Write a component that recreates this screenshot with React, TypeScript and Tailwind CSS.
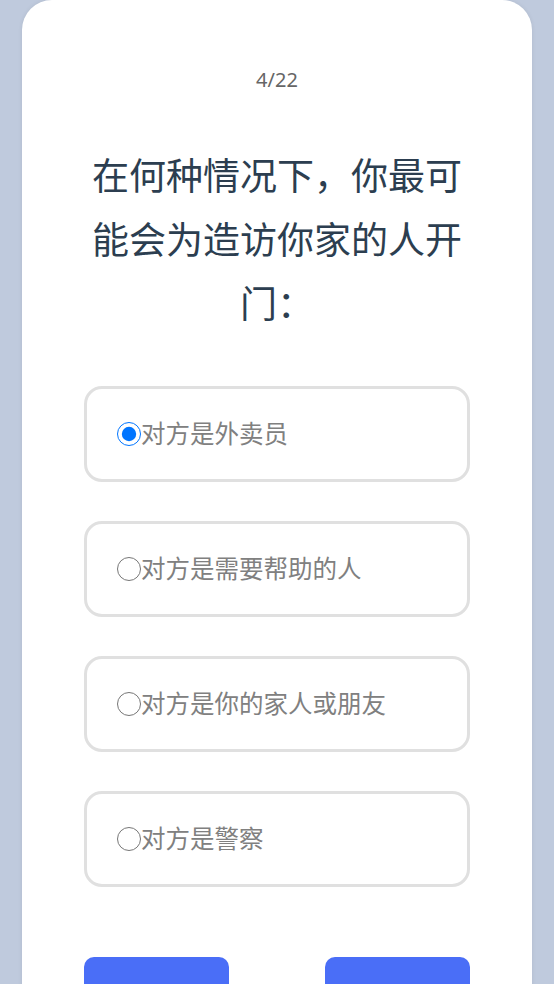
import { useState } from 'react';

const options = ['对方是外卖员', '对方是需要帮助的人', '对方是你的家人或朋友', '对方是警察'];

export default function App() {
  const [picked, setPicked] = useState(0);

  return (
    <div
      className="min-h-screen bg-[#bfcadd] px-[22px]"
      style={{ fontFamily: '"Noto Sans", "Noto Sans CJK SC", sans-serif' }}
    >
      <div className="bg-white rounded-t-[30px] shadow-[0_0_4px_rgba(0,0,0,0.08)] px-[62px] pt-[66px] pb-10 min-h-[984px]">
        {/* progress */}
        <p className="text-center text-[20px] leading-[28px] text-[#666]">4/22</p>

        {/* question */}
        <h1 className="mt-[50px] text-center text-[37px] leading-[64px] font-normal text-[#2c3e50]">
          在何种情况下，你最可能会为造访你家的人开门：
        </h1>

        {/* answers */}
        <div className="mt-[50px] flex flex-col gap-[39px]">
          {options.map((o, i) => (
            <label
              key={o}
              className="h-[96px] flex items-center pl-[30px] pr-4 border-[3px] border-[#e0e0e0] rounded-[18px] cursor-pointer"
            >
              <input
                type="radio"
                name="answer"
                checked={picked === i}
                onChange={() => setPicked(i)}
                className="m-0 w-[24px] h-[24px] shrink-0"
              />
              <span className="text-[24.5px] text-[#808080] leading-none">{o}</span>
            </label>
          ))}
        </div>

        {/* nav */}
        <div className="mt-[70px] flex justify-between">
          <button aria-label="上一题" className="w-[145px] h-[52px] rounded-[10px] bg-[#4a6ef7]" />
          <button aria-label="下一题" className="w-[145px] h-[52px] rounded-[10px] bg-[#4a6ef7]" />
        </div>
      </div>
    </div>
  );
}
